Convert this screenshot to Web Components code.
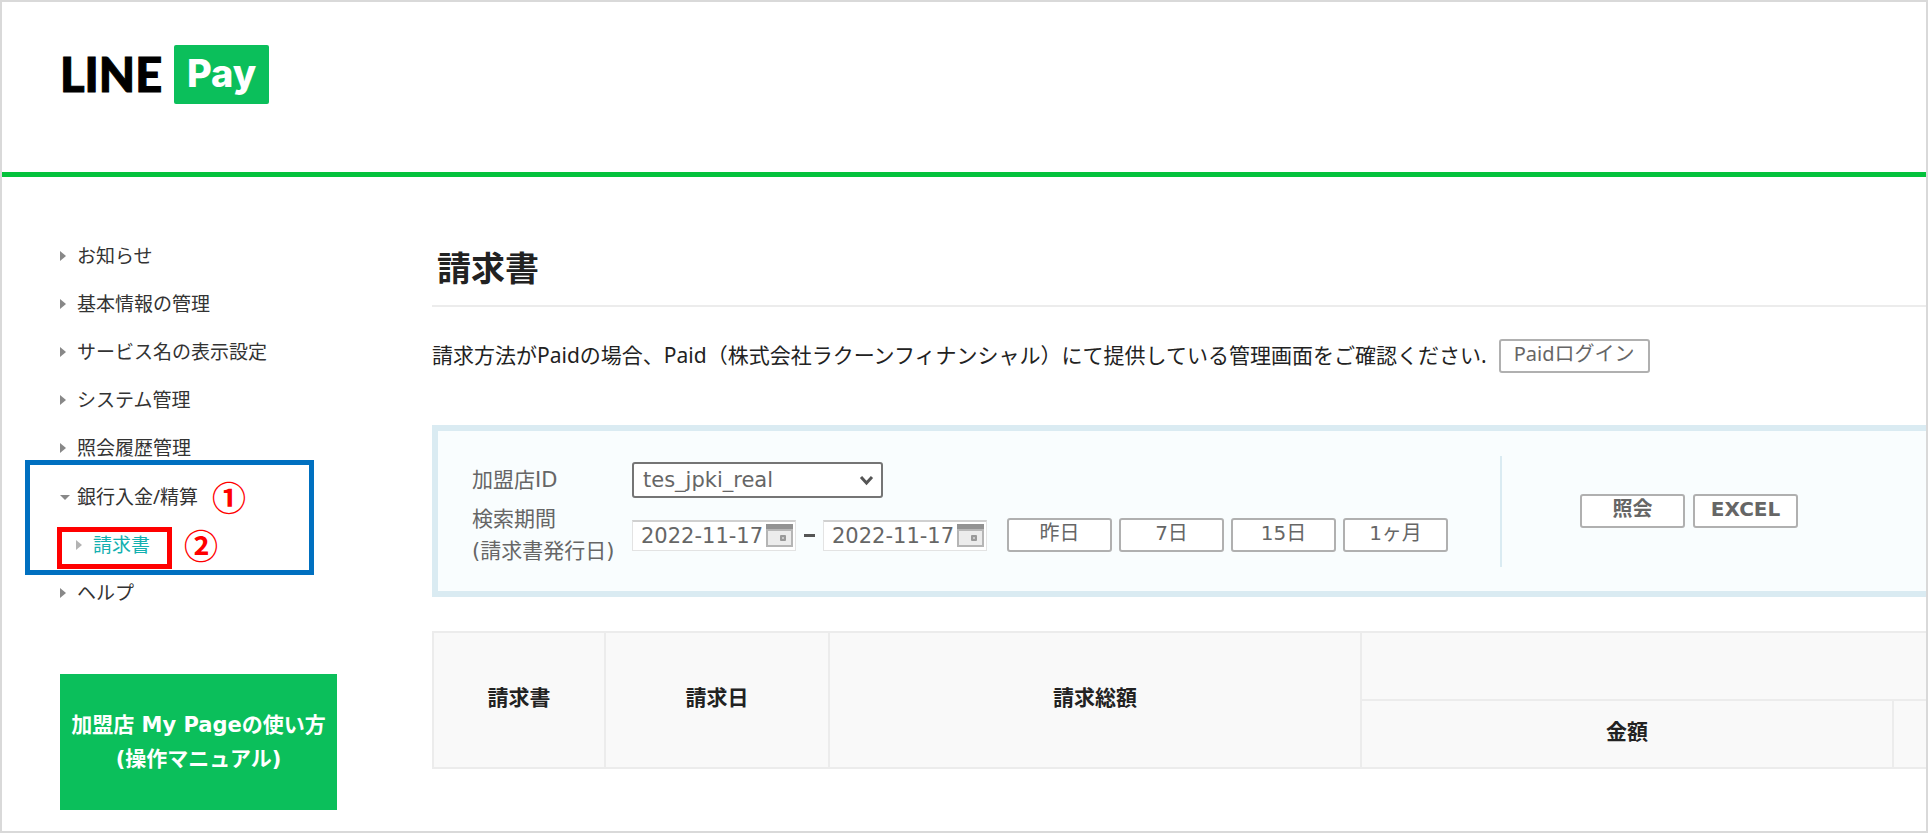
<!DOCTYPE html>
<html lang="ja">
<head>
<meta charset="utf-8">
<meta name="viewport" content="width=device-width, initial-scale=1">
<title>請求書 | LINE Pay</title>
<style>
  body {
    margin: 0;
    background: #fff;
    color: #333;
    font-family: "Noto Sans", "Noto Sans CJK JP", sans-serif;
    font-size: 21px;
    --form-font: "DejaVu Sans", "Noto Sans CJK JP", sans-serif;
    --green: #0bbf5b;
    --line: #ececec;
  }
</style>
</head>
<body>
<my-page>
  <brand-header slot="header"></brand-header>
  <side-nav slot="aside">
    <nav-item>お知らせ</nav-item>
    <nav-item>基本情報の管理</nav-item>
    <nav-item>サービス名の表示設定</nav-item>
    <nav-item>システム管理</nav-item>
    <nav-item>照会履歴管理</nav-item>
    <nav-group>
      <nav-item open>銀行入金/精算</nav-item>
      <step-mark slot="mark">①</step-mark>
      <nav-item slot="sub" current>請求書</nav-item>
      <step-mark slot="submark">②</step-mark>
    </nav-group>
    <nav-item>ヘルプ</nav-item>
  </side-nav>
  <manual-banner slot="aside"></manual-banner>
  <page-title>請求書</page-title>
  <paid-notice>請求方法がPaidの場合、Paid（株式会社ラクーンフィナンシャル）にて提供している管理画面をご確認ください.</paid-notice>
  <search-panel></search-panel>
  <invoice-table></invoice-table>
</my-page>

<script>
// 共通の基底クラス
class BaseElement extends HTMLElement {
  constructor() {
    super();
    this.attachShadow({ mode: 'open' });
    this.shadowRoot.innerHTML = `<style>${this.styles()}</style>${this.template()}`;
  }
  styles() { return ':host { display: block; }'; }
  template() { return '<slot></slot>'; }
}

// ページ全体の枠
class MyPage extends BaseElement {
  styles() {
    return `
      :host {
        display: block;
        box-sizing: border-box;
        min-height: 100vh;
        border: 2px solid #d9d9d9;
        overflow: hidden;
      }
      .body { display: grid; grid-template-columns: 430px minmax(0, 1fr); }
      aside { padding: 55px 0 18px 58px; }
      main { padding-top: 66px; }
    `;
  }
  template() {
    return `
      <slot name="header"></slot>
      <div class="body">
        <aside><slot name="aside"></slot></aside>
        <main><slot></slot></main>
      </div>
    `;
  }
}

// ヘッダーとロゴ
class BrandHeader extends BaseElement {
  styles() {
    return `
      :host { display: block; border-bottom: 5px solid #04c23c; padding: 43px 58px 68px; }
      header { display: flex; }
      a {
        display: flex;
        gap: 12px;
        color: #000;
        text-decoration: none;
      }
      .line {
        font: 900 47px/59px Lato, sans-serif;
        -webkit-text-stroke: 1px #000;
      }
      .pay {
        width: 95px;
        border-radius: 2px;
        background: var(--green);
        color: #fff;
        font: 800 38px/56px Inter, sans-serif;
        height: 59px;
        text-align: center;
      }
    `;
  }
  template() {
    return '<header><a href="#"><span class="line">LINE</span><span class="pay">Pay</span></a></header>';
  }
}

// サイドメニュー
class SideNav extends BaseElement {
  styles() {
    return ':host { display: block; font-size: 19px; } nav { display: grid; }';
  }
  template() { return '<nav><slot></slot></nav>'; }
}

class NavItem extends BaseElement {
  styles() {
    return `
      :host { display: flex; height: 48px; line-height: 48px; }
      a { display: flex; align-items: center; color: #333; text-decoration: none; }
      svg { width: 10px; height: 10px; margin-right: 7px; fill: #888; }
      .down { display: none; }
      :host([open]) .down { display: block; }
      :host([open]) .right { display: none; }
      :host([current]) a { color: #12b0b0; }
      :host([current]) svg { fill: #b3b3b3; }
    `;
  }
  template() {
    return `
      <a href="#">
        <svg class="right" viewBox="0 0 10 10"><path d="M0 0v10l6-5z"/></svg>
        <svg class="down" viewBox="0 0 10 10"><path d="M0 3h10l-5 5z"/></svg>
        <slot></slot>
      </a>
    `;
  }
}

// 子メニュー付きの項目。手順の枠を上に重ねる
class NavGroup extends BaseElement {
  styles() {
    return `
      :host { display: block; position: relative; margin-top: 1px; }
      .row { display: flex; align-items: center; gap: 14px; height: 48px; }
      .sub { padding-left: 16px; gap: 34px; }
      .frame { position: absolute; box-sizing: border-box; pointer-events: none; }
      .blue { left: -35px; top: -13px; width: 289px; height: 115px; border: 5px solid #0070c0; }
      .red { left: -3px; top: 54px; width: 115px; height: 42px; border: 5px solid #f00; }
    `;
  }
  template() {
    return `
      <div class="row"><slot></slot><slot name="mark"></slot></div>
      <div class="row sub"><slot name="sub"></slot><slot name="submark"></slot></div>
      <div class="frame blue"></div>
      <div class="frame red"></div>
    `;
  }
}

class StepMark extends BaseElement {
  styles() {
    return `
      :host {
        display: block;
        color: #f00;
        font-family: "Noto Sans CJK JP", sans-serif;
        font-size: 34px;
        font-weight: 700;
        line-height: 48px;
      }
    `;
  }
}

// 操作マニュアルへのバナー
class ManualBanner extends BaseElement {
  styles() {
    return `
      :host { display: block; margin-top: 57px; }
      a {
        display: grid;
        align-content: center;
        width: 277px;
        height: 136px;
        background: var(--green);
        color: #fff;
        font: 700 21px/34px var(--form-font);
        text-align: center;
        text-decoration: none;
        white-space: nowrap;
      }
    `;
  }
  template() {
    return '<a href="#"><span>加盟店 My Pageの使い方</span><span>(操作マニュアル)</span></a>';
  }
}

class PageTitle extends BaseElement {
  styles() {
    return `
      :host { display: block; border-bottom: 2px solid var(--line); }
      h1 { margin: 0; padding: 0 0 12px 5px; color: #222; font-size: 34px; line-height: 50px; }
    `;
  }
  template() { return '<h1><slot></slot></h1>'; }
}

// 枠線ボタン
const buttonStyle = `
  button {
    box-sizing: border-box;
    height: 34px;
    padding: 0 0 4px;
    border: 2px solid #b0b0b0;
    border-radius: 3px;
    background: #fff;
    color: #666;
    font-family: inherit;
    font-size: 20px;
    line-height: 26px;
  }
`;

class PaidNotice extends BaseElement {
  styles() {
    return `
      :host { display: block; margin-top: 32px; }
      div { display: flex; align-items: center; gap: 12px; color: #222; }
      p { margin: 0; padding-bottom: 2px; line-height: 32px; white-space: nowrap; }
      ${buttonStyle}
      button { width: 151px; }
    `;
  }
  template() {
    return '<div><p><slot></slot></p><button type="button">Paidログイン</button></div>';
  }
}

// カレンダーのアイコン
class CalendarIcon extends BaseElement {
  styles() { return ':host, svg { display: block; width: 27px; height: 23px; }'; }
  template() {
    return `
      <svg viewBox="0 0 27 23">
        <rect x="1" y="1" width="25" height="21" fill="#ececec" stroke="#b5b5b5" stroke-width="2"/>
        <path d="M0 0h27v6H0z" fill="#929292"/>
        <path d="M0 5h27v2H0z" fill="#b8b8b8"/>
        <rect x="14" y="11" width="6" height="6" rx="1" fill="#999"/>
        <rect x="16" y="13" width="2" height="2" fill="#c8c8c8"/>
      </svg>
    `;
  }
}

// 検索条件
class SearchPanel extends BaseElement {
  dateField(id, label) {
    return `
      <span class="date">
        <input id="${id}" type="text" value="2022-11-17" aria-label="${label}">
        <button class="cal" type="button" aria-label="カレンダー"><calendar-icon></calendar-icon></button>
      </span>
    `;
  }
  styles() {
    return `
      :host { display: block; margin-top: 52px; }
      form {
        display: flex;
        border: 6px solid #daebf2;
        border-right: 0;
        background: #f9fdfe;
        color: #666;
        font-family: var(--form-font);
      }
      .fields {
        display: grid;
        grid-template-columns: 160px auto;
        row-gap: 5px;
        align-items: center;
        padding: 31px 52px 24px 34px;
        white-space: nowrap;
      }
      label { line-height: 32px; }
      .select { position: relative; width: 251px; }
      select {
        display: block;
        box-sizing: border-box;
        width: 100%;
        height: 36px;
        padding: 0 9px;
        border: 2px solid #757575;
        border-radius: 3px;
        appearance: none;
        background: #fff;
        color: #666;
        font: inherit;
      }
      .select svg { position: absolute; right: 9px; top: 12px; width: 15px; height: 12px; pointer-events: none; }
      .period, .days, .actions { display: flex; align-items: center; }
      .date {
        display: flex;
        align-items: center;
        box-sizing: border-box;
        width: 164px;
        height: 31px;
        padding-right: 2px;
        border: 1px solid #e3e3e3;
        border-top: 2px solid #d0d0d0;
        background: #fff;
      }
      .date input {
        flex: 1;
        min-width: 0;
        padding: 0 0 0 8px;
        border: 0;
        background: none;
        color: #666;
        font: inherit;
      }
      .dash { width: 11px; height: 3px; margin: 0 8px; background: #555; }
      ${buttonStyle}
      button.cal { flex: none; height: auto; padding: 0; border: 0; }
      .days { gap: 7px; margin-left: 20px; }
      .days button, .actions button { width: 105px; }
      .divider { margin: 25px 0 24px; border-left: 2px solid #daebf2; }
      .actions { gap: 8px; padding-left: 78px; }
      .actions button { font-weight: 700; }
    `;
  }
  template() {
    return `
      <form>
        <div class="fields">
          <label for="shop">加盟店ID</label>
          <div class="select">
            <select id="shop"><option>tes_jpki_real</option></select>
            <svg viewBox="0 0 15 12"><path d="M2 3l5.500 6L13 3" fill="none" stroke="#555" stroke-width="3"/></svg>
          </div>
          <label for="from">検索期間<br>(請求書発行日)</label>
          <div class="period">
            ${this.dateField('from', '開始日')}
            <span class="dash"></span>
            ${this.dateField('to', '終了日')}
            <div class="days">
              ${['昨日', '7日', '15日', '1ヶ月'].map(d => `<button type="button">${d}</button>`).join('')}
            </div>
          </div>
        </div>
        <div class="divider"></div>
        <div class="actions">
          <button type="button">照会</button>
          <button type="button">EXCEL</button>
        </div>
      </form>
    `;
  }
}

// 請求書一覧
class InvoiceTable extends BaseElement {
  styles() {
    return `
      :host { display: block; margin-top: 34px; }
      table { width: 100%; border-collapse: collapse; table-layout: fixed; }
      th {
        height: 60px;
        padding: 0 0 6px;
        border: 2px solid var(--line);
        border-right-width: 0;
        background: #f9f9f9;
        color: #222;
        font-size: 21px;
        line-height: 30px;
      }
      .c1 { width: 172px; }
      .c2 { width: 224px; }
      .c3 { width: 532px; }
    `;
  }
  template() {
    return `
      <table>
        <colgroup><col class="c1"><col class="c2"><col class="c3"><col class="c3"><col></colgroup>
        <thead>
          <tr>
            <th rowspan="2">請求書</th>
            <th rowspan="2">請求日</th>
            <th rowspan="2">請求総額</th>
            <th colspan="2"></th>
          </tr>
          <tr><th>金額</th><th></th></tr>
        </thead>
      </table>
    `;
  }
}

customElements.define('my-page', MyPage);
customElements.define('brand-header', BrandHeader);
customElements.define('side-nav', SideNav);
customElements.define('nav-item', NavItem);
customElements.define('nav-group', NavGroup);
customElements.define('step-mark', StepMark);
customElements.define('manual-banner', ManualBanner);
customElements.define('page-title', PageTitle);
customElements.define('paid-notice', PaidNotice);
customElements.define('calendar-icon', CalendarIcon);
customElements.define('search-panel', SearchPanel);
customElements.define('invoice-table', InvoiceTable);
</script>
</body>
</html>
